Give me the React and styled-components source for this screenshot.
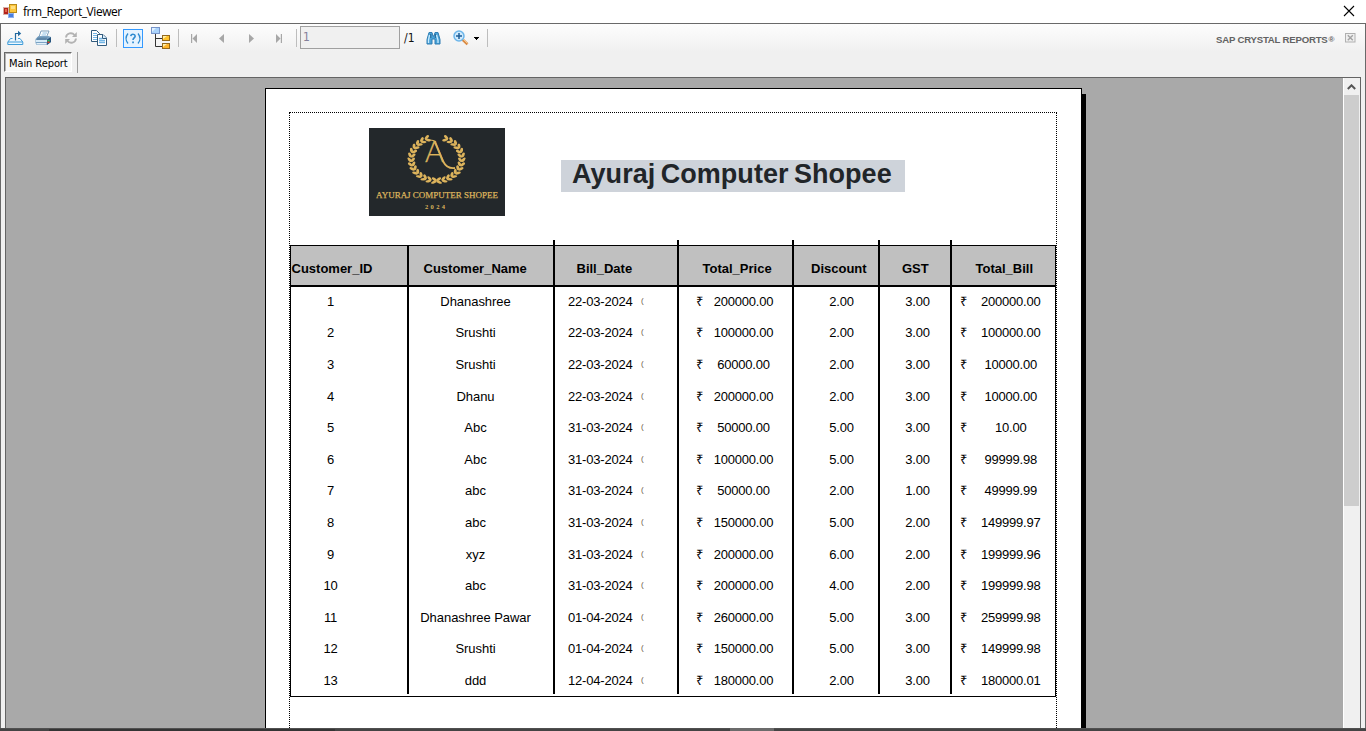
import React from 'react';
import styled, { createGlobalStyle } from 'styled-components';

const GlobalStyle = createGlobalStyle`
  * { box-sizing: border-box; }
  body { margin: 0; background: #fff; overflow: hidden; font-family: "Liberation Sans", Arial, sans-serif; }
  svg { display: block; }
`;

const Window = styled.div`
  width: 1366px;
  height: 731px;
  display: flex;
  flex-direction: column;
  overflow: hidden;
`;

const TitleBar = styled.header`
  height: 23px;
  flex: none;
  display: flex;
  align-items: center;
  padding: 0 11px 2px 3px;
  background: #fff;
`;

const WindowTitle = styled.span`
  flex: 1;
  margin-left: 6px;
  padding-top: 2px;
  font: 12px/22px "Open Sans", "Noto Sans", sans-serif;
  letter-spacing: -0.44px;
  color: #000;
`;

const Client = styled.main`
  flex: 1;
  min-height: 0;
  display: flex;
  flex-direction: column;
  background: #f0f0f0;
  border: 1px solid #696969;
  border-bottom: 0;
`;

const Toolbar = styled.div`
  height: 28px;
  flex: none;
  display: flex;
  align-items: center;
  padding-left: 6px;
  padding-right: 9px;
  background: linear-gradient(#fdfdfd, #f0f0f0);
`;

const Tool = styled.span`
  flex: none;
  width: ${(p) => p.$w}px;
  margin-right: ${(p) => p.$gap || 0}px;
`;

const Separator = styled.span`
  flex: none;
  width: 1px;
  height: 18px;
  background: #bdbdbd;
  margin-right: ${(p) => p.$gap}px;
`;

const PageInput = styled.span`
  flex: none;
  width: 100px;
  height: 23px;
  margin-right: 4px;
  margin-bottom: 1px;
  padding-left: 2px;
  border: 1px solid #a0a0a0;
  background: #f0f0f0;
  color: #85809a;
  font: 12px/20px "DejaVu Sans Condensed", sans-serif;
`;

const PageCount = styled.span`
  flex: none;
  width: 22px;
  font: 12px/22px "DejaVu Sans Condensed", sans-serif;
  color: #111;
`;

const Brand = styled.span`
  margin-left: auto;
  width: 129px;
  padding-top: 3px;
  font-size: 9.6px;
  font-weight: bold;
  letter-spacing: -0.2px;
  color: #636363;
  white-space: nowrap;

  sup { margin-left: 1px; font-size: 8px; line-height: 0; vertical-align: 1px; }
`;

const TabStrip = styled.div`
  height: 25px;
  flex: none;
  display: flex;
  align-items: flex-start;
  padding-left: 3px;
`;

const Tab = styled.span`
  width: 68px;
  height: 20px;
  margin-right: 5px;
  padding-left: 4px;
  background: #f8f8f8;
  border: 1px solid #fff;
  border-top-color: #696969;
  border-left-color: #696969;
  box-shadow: inset 1px 1px 0 #b5b5b5;
  font: 11px/21px "DejaVu Sans Condensed", sans-serif;
  letter-spacing: -0.08px;
  color: #000;
  white-space: nowrap;
`;

const TabDivider = styled.span`
  width: 1px;
  height: 21px;
  background: #a0a0a0;
`;

const Viewer = styled.div`
  flex: 1;
  min-height: 0;
  display: flex;
  margin: 0 4px;
  border: 1px solid #646464;
  border-bottom: 0;
  background: #a9a9a9;
`;

const Canvas = styled.div`
  flex: 1;
  padding: 10px 0 0 259px;
  overflow: hidden;
`;

const ScrollBar = styled.div`
  width: 17px;
  border-left: 1px solid #fff;
  background: #f0f0f0;
`;

const ScrollArrow = styled.div`
  height: 17px;
  padding: 6px 0 0 3px;
`;

const ScrollThumb = styled.div`
  width: 15px;
  height: 411px;
  background: #cdcdcd;
`;

const Paper = styled.div`
  width: 817px;
  height: 700px;
  padding: 23px 0 0 23px;
  background: #fff;
  border: 1px solid #000;
  box-shadow: 4px 6px 0 #000;
`;

const Margins = styled.div`
  width: 768px;
  height: 670px;
  border: 1px dotted #000;
`;

const ReportHead = styled.div`
  height: 132px;
  display: flex;
  padding: 15px 0 0 79px;
`;

const ReportTitle = styled.h1`
  width: 344px;
  height: 32px;
  margin: 32px 0 0 56px;
  padding-left: 11px;
  background: #ced3da;
  color: #212529;
  font-size: 27px;
  line-height: 29px;
  word-spacing: -2.2px;
  letter-spacing: 0.05px;
  white-space: nowrap;
`;

const Table = styled.div`
  width: 766px;
  height: 452px;
  display: flex;
  align-items: flex-start;
  border: 1px solid #000;
`;

const Column = styled.div`
  width: ${(p) => p.$w}px;
  height: ${(p) => (p.$tall ? 454 : 448)}px;
  margin-top: ${(p) => (p.$tall ? -6 : 0)}px;
  padding-top: ${(p) => (p.$tall ? 6 : 0)}px;
  border-left: ${(p) => (p.$first ? 0 : 2)}px solid #000;
`;

const HeadCell = styled.div`
  height: 41px;
  padding: 6px 0 0 ${(p) => p.$pad}px;
  background: #c0c0c0;
  border-bottom: 2px solid #000;
  font-size: 13px;
  font-weight: bold;
  line-height: 34px;
  white-space: nowrap;
`;

const Rows = styled.div`
  margin-top: -2.22px;
`;

const Cell = styled.div`
  height: 31.6px;
  display: flex;
  padding-left: ${(p) => p.$pad}px;
  font-size: 13px;
  line-height: 33px;
  letter-spacing: ${(p) => p.$track ?? -0.2}px;
  color: #000;
  white-space: nowrap;
`;

const Value = styled.span`
  flex: none;
  width: ${(p) => p.$w}px;
  text-align: center;
`;

const Currency = styled.span`
  flex: none;
  width: 10px;
`;

const DateText = styled.span`
  width: 73px;
`;

const TimeMark = styled.span`
  font-size: 8px;
  line-height: 32px;
  color: #6d5a48;
`;

const TaskStrip = styled.footer`
  height: 3px;
  flex: none;
  display: flex;
  background: #444;
  border-top: 1px solid #505050;
`;

const TaskItem = styled.span`
  width: ${(p) => p.$w}px;
  margin-left: ${(p) => p.$x}px;
  margin-top: ${(p) => (p.$active ? -1 : 0)}px;
  background: ${(p) => (p.$active ? '#6b6b6b' : '#343434')};
`;

const AppIcon = () => (
  <svg width="14" height="14" viewBox="0 0 14 14">
    <rect x=".5" y="3.500" width="5" height="7" fill="#b5231a" stroke="#d9b0a8" />
    <path d="M2 5h2v3H2z" fill="#e2674c" />
    <rect x="6.500" y=".5" width="7" height="8" fill="#fcc63e" stroke="#b98b1a" />
    <path d="M8 2h4v3H8z" fill="#ffdf80" />
    <rect x="5.500" y="9.500" width="5" height="4" fill="#4a7fe0" stroke="#8fb0ee" />
  </svg>
);

const CloseIcon = () => (
  <svg width="12" height="12" viewBox="0 0 12 12">
    <path d="M1 1l10 10M11 1L1 11" stroke="#000" strokeWidth="1.1" />
  </svg>
);

const ExportIcon = () => (
  <svg width="17" height="16" viewBox="0 0 17 16">
    <path d="M5.500 8.500H3.500L.8 12v2.500h15V12L13 8.500h-2" fill="#eef8ff" stroke="#3d9bd8" />
    <path d="M1 12h14.500" stroke="#3d9bd8" />
    <path d="M8.500 10.500V3.500h3" fill="none" stroke="#23699f" strokeWidth="1.2" />
    <path d="M11 .8l3.200 2.700L11 6.200z" fill="#23699f" />
  </svg>
);

const PrinterIcon = () => (
  <svg width="17" height="16" viewBox="0 0 17 16">
    <path d="M6 1h8l-2.500 6H4z" fill="#fff" stroke="#7fa0bd" />
    <path d="M7.500 3h4.500M6.500 5h4.500" stroke="#8fc0e4" />
    <path d="M2.500 7l1-1h10l2.500 1v5l-4 3H1.500L.5 13V9z" fill="#7ba3c4" />
    <path d="M2.500 7.500h10l-1.500 2.500H1.500z" fill="#5f87a9" />
    <path d="M1 10h11v2H1z" fill="#d7ebf8" />
    <path d="M1.500 13h10v1.500h-10z" fill="#e4f0f8" />
    <path d="M12 9.500L16 7v5l-4 3z" fill="#28557e" />
    <path d="M12.500 10h2.200v1.500h-2.200z" fill="#2dc25b" />
    <path d="M12.500 11.500h2v1.500h-2z" fill="#e43c2b" />
  </svg>
);

const RefreshIcon = () => (
  <svg width="14" height="14" viewBox="0 0 14 14" fill="none" stroke="#b3b3b3" strokeWidth="1.900">
    <path d="M2 6.500C2.500 2 8 1 10.500 4M12 7.500C11.500 12 6 13 3.500 10" />
    <path d="M12.800 1v5H8zM1.200 13V8H6z" fill="#b3b3b3" stroke="none" />
  </svg>
);

const CopyIcon = () => (
  <svg width="18" height="18" viewBox="0 0 18 18">
    <path d="M1.500 1.500h5l3 3v8h-8z" fill="#fff" stroke="#315b7d" />
    <path d="M3 4.500h4M3 6.500h5M3 8.500h5M3 10.500h5" stroke="#72b5e5" />
    <path d="M7.500 5.500h5.500l3.500 3.500v7.500h-9z" fill="#fff" stroke="#315b7d" />
    <path d="M12.500 5.500V9.500h4" fill="#d9efff" stroke="#315b7d" />
    <path d="M9 9.500h3M9 11.500h6M9 13.500h6" stroke="#72b5e5" strokeWidth="1.300" />
  </svg>
);

const HelpIcon = () => (
  <svg width="20" height="19" viewBox="0 0 20 19">
    <rect x=".5" y=".5" width="19" height="18" fill="#e5f3ff" stroke="#3399ff" />
    <path d="M5 4.500Q1 9.500 5 14.500M15 4.500q4 5 0 10" fill="none" stroke="#2d8ad0" strokeWidth="1.300" />
    <path d="M7.800 7.200Q8 5.200 10 5.200T12.200 7C12.200 8.800 10 9 10 11" fill="none" stroke="#2d8ad0" strokeWidth="1.600" />
    <path d="M9.200 12.500h1.700v1.700H9.200z" fill="#2d8ad0" />
  </svg>
);

const TreeIcon = () => (
  <svg width="20" height="22" viewBox="0 0 20 22">
    <path d="M4.500 7v12.500H11M4.500 11.500H11" fill="none" stroke="#333" />
    <rect x=".5" y=".5" width="8" height="6" fill="#a9d2fb" stroke="#7693c9" />
    <path d="M1 1h4L1 5z" fill="#e2f2ff" />
    <rect x="11.500" y="8.500" width="7" height="5" fill="#ffc229" stroke="#94691c" />
    <path d="M12 9h4l-4 3z" fill="#fff0ab" />
    <rect x="11.500" y="16.500" width="7" height="5" fill="#ffb429" stroke="#94691c" />
    <path d="M12 17h4l-4 3z" fill="#fff0ab" />
  </svg>
);

const NavIcon = ({ kind }) => (
  <svg width="8" height="11" viewBox="0 0 8 11" fill="#a7a7a7">
    {kind === 'first' && <path d="M1 1h1.200v9H1zM7 1v9L2.500 5.500z" />}
    {kind === 'prev' && <path d="M6 1v9L1 5.500z" />}
    {kind === 'next' && <path d="M1 1v9l5-4.500z" />}
    {kind === 'last' && <path d="M1 1v9l4.500-4.500zM5.800 1H7v9H5.800z" />}
  </svg>
);

const BinocularsIcon = () => (
  <svg width="15" height="14" viewBox="0 0 15 14">
    <path d="M3 1.500h3L7 5h1l1-3.500h3l2 7V13H9V8H6v5H1V8.500z" fill="#4aa3d8" stroke="#2f7db3" />
    <path d="M3.500 4L2.500 9v3M10.500 4l1.500 5v3" stroke="#c9ecff" strokeWidth="1.300" fill="none" />
    <path d="M4.800 3v4M9.300 3v4" stroke="#23618f" />
  </svg>
);

const ZoomIcon = () => (
  <svg width="16" height="16" viewBox="0 0 16 16">
    <path d="M9.500 9.500l5 4.800" stroke="#d98a45" strokeWidth="2.600" />
    <path d="M10 9l4.500 4.500" stroke="#f8c98c" strokeWidth="1" />
    <circle cx="6" cy="6" r="5" fill="#cfeafd" stroke="#6db6ea" strokeWidth="1.500" />
    <path d="M6 3v6M3 6h6" stroke="#1f5e97" strokeWidth="1.500" />
  </svg>
);

const CaretIcon = () => (
  <svg width="5" height="3" viewBox="0 0 5 3">
    <path d="M0 0h5v1H4v1H3v1H2V2H1V1H0z" fill="#000" />
  </svg>
);

const CloseTabIcon = () => (
  <svg width="11" height="10" viewBox="0 0 11 10">
    <rect x=".5" y=".5" width="9.500" height="8.500" fill="#efefef" stroke="#b0b0b0" />
    <path d="M2.800 2.300l5 5M7.800 2.300l-5 5" stroke="#a2a2a2" strokeWidth="1.400" />
  </svg>
);

const ArrowUpIcon = () => (
  <svg width="9" height="6" viewBox="0 0 9 6">
    <path d="M.8 5L4.500 1.300L8.200 5" fill="none" stroke="#555" strokeWidth="2" />
  </svg>
);

const LEAF_ANGLES = Array.from({ length: 14 }, (_, i) => 8 + i * 11.8);

const Branch = () => (
  <g>
    {LEAF_ANGLES.map((a) => (
      <g key={a} transform={`rotate(${-a}) translate(0 25.300)`}>
        <ellipse cx="0" cy="-2" rx="3" ry="1.500" transform="rotate(-34)" />
        <ellipse cx="0" cy="2" rx="3" ry="1.500" transform="rotate(34)" />
      </g>
    ))}
  </g>
);

const Logo = () => (
  <svg width="136" height="88" viewBox="0 0 136 88">
    <rect width="136" height="88" fill="#23282b" />
    <g fill="#dcb35c">
      <g transform="translate(67.500 31) scale(1 .86)">
        <Branch />
        <g transform="scale(-1 1)"><Branch /></g>
      </g>
      <text x="56" y="34" fontFamily="Lato, sans-serif" fontWeight="300" fontSize="29" stroke="#dcb35c" strokeWidth=".3">A</text>
      <path d="M58 12.500q5-1.500 9 1.500" fill="none" stroke="#dcb35c" strokeWidth="1.200" />
      <path d="M66 14L74.500 34Q78 41 86 40" fill="none" stroke="#dcb35c" strokeWidth="1.800" />
      <text x="7" y="69.700" fontFamily="Liberation Serif, serif" fontSize="9" stroke="#dcb35c" strokeWidth=".25" textLength="122" lengthAdjust="spacingAndGlyphs">AYURAJ COMPUTER SHOPEE</text>
      <text x="56" y="80.500" fontFamily="Liberation Serif, serif" fontSize="6.500" fontWeight="bold" textLength="20">2024</text>
    </g>
  </svg>
);

const bills = [
  ['1', 'Dhanashree', '22-03-2024', '200000.00', '2.00', '3.00', '200000.00'],
  ['2', 'Srushti', '22-03-2024', '100000.00', '2.00', '3.00', '100000.00'],
  ['3', 'Srushti', '22-03-2024', '60000.00', '2.00', '3.00', '10000.00'],
  ['4', 'Dhanu', '22-03-2024', '200000.00', '2.00', '3.00', '10000.00'],
  ['5', 'Abc', '31-03-2024', '50000.00', '5.00', '3.00', '10.00'],
  ['6', 'Abc', '31-03-2024', '100000.00', '5.00', '3.00', '99999.98'],
  ['7', 'abc', '31-03-2024', '50000.00', '2.00', '1.00', '49999.99'],
  ['8', 'abc', '31-03-2024', '150000.00', '5.00', '2.00', '149999.97'],
  ['9', 'xyz', '31-03-2024', '200000.00', '6.00', '2.00', '199999.96'],
  ['10', 'abc', '31-03-2024', '200000.00', '4.00', '2.00', '199999.98'],
  ['11', 'Dhanashree Pawar', '01-04-2024', '260000.00', '5.00', '3.00', '259999.98'],
  ['12', 'Srushti', '01-04-2024', '150000.00', '5.00', '3.00', '149999.98'],
  ['13', 'ddd', '12-04-2024', '180000.00', '2.00', '3.00', '180000.01'],
];

const columns = [
  { title: 'Customer_ID', width: 116, headPad: 0.5, pad: 0.5, value: 78 },
  { title: 'Customer_Name', width: 146, headPad: 14.5, pad: 0, value: 133, track: -0.05 },
  { title: 'Bill_Date', width: 124, tall: true, headPad: 21.5, pad: 13, date: true },
  { title: 'Total_Price', width: 115, tall: true, headPad: 23.5, pad: 17, value: 75, money: true },
  { title: 'Discount', width: 86, tall: true, headPad: 17, pad: 0, value: 95 },
  { title: 'GST', width: 72, tall: true, headPad: 22, pad: 0, value: 75 },
  { title: 'Total_Bill', width: 105, tall: true, headPad: 23.5, pad: 8, value: 81.5, money: true },
];

export default function App() {
  return (
    <Window>
      <GlobalStyle />
      <TitleBar>
        <AppIcon />
        <WindowTitle>frm_Report_Viewer</WindowTitle>
        <CloseIcon />
      </TitleBar>
      <Client>
        <Toolbar>
          <Tool $w={17} $gap={11}><ExportIcon /></Tool>
          <Tool $w={17} $gap={12}><PrinterIcon /></Tool>
          <Tool $w={14} $gap={12}><RefreshIcon /></Tool>
          <Tool $w={18} $gap={8}><CopyIcon /></Tool>
          <Separator $gap={6} />
          <Tool $w={20} $gap={8}><HelpIcon /></Tool>
          <Tool $w={20} $gap={7}><TreeIcon /></Tool>
          <Separator $gap={11} />
          <Tool $w={8} $gap={20}><NavIcon kind="first" /></Tool>
          <Tool $w={8} $gap={22}><NavIcon kind="prev" /></Tool>
          <Tool $w={8} $gap={19}><NavIcon kind="next" /></Tool>
          <Tool $w={8} $gap={13}><NavIcon kind="last" /></Tool>
          <Separator $gap={3} />
          <PageInput>1</PageInput>
          <PageCount>/1</PageCount>
          <Tool $w={15} $gap={12}><BinocularsIcon /></Tool>
          <Tool $w={16} $gap={5}><ZoomIcon /></Tool>
          <Tool $w={5} $gap={8}><CaretIcon /></Tool>
          <Separator $gap={0} />
          <Brand>SAP CRYSTAL REPORTS<sup>®</sup></Brand>
          <Tool $w={11}><CloseTabIcon /></Tool>
        </Toolbar>
        <TabStrip>
          <Tab>Main Report</Tab>
          <TabDivider />
        </TabStrip>
        <Viewer>
          <Canvas>
            <Paper>
              <Margins>
                <ReportHead>
                  <Logo />
                  <ReportTitle>Ayuraj Computer Shopee</ReportTitle>
                </ReportHead>
                <Table>
                  {columns.map((col, c) => (
                    <Column key={col.title} $w={col.width} $tall={col.tall} $first={c === 0}>
                      <HeadCell $pad={col.headPad}>{col.title}</HeadCell>
                      <Rows>
                        {bills.map((bill) => (
                          <Cell key={bill[0]} $pad={col.pad} $track={col.track}>
                            {col.money && <Currency>₹</Currency>}
                            {col.date ? (
                              <>
                                <DateText>{bill[c]}</DateText>
                                <TimeMark>(</TimeMark>
                              </>
                            ) : (
                              <Value $w={col.value}>{bill[c]}</Value>
                            )}
                          </Cell>
                        ))}
                      </Rows>
                    </Column>
                  ))}
                </Table>
              </Margins>
            </Paper>
          </Canvas>
          <ScrollBar>
            <ScrollArrow><ArrowUpIcon /></ScrollArrow>
            <ScrollThumb />
          </ScrollBar>
        </Viewer>
      </Client>
      <TaskStrip>
        <TaskItem $x={49} $w={286} />
        <TaskItem $x={395} $w={44} $active />
      </TaskStrip>
    </Window>
  );
}
